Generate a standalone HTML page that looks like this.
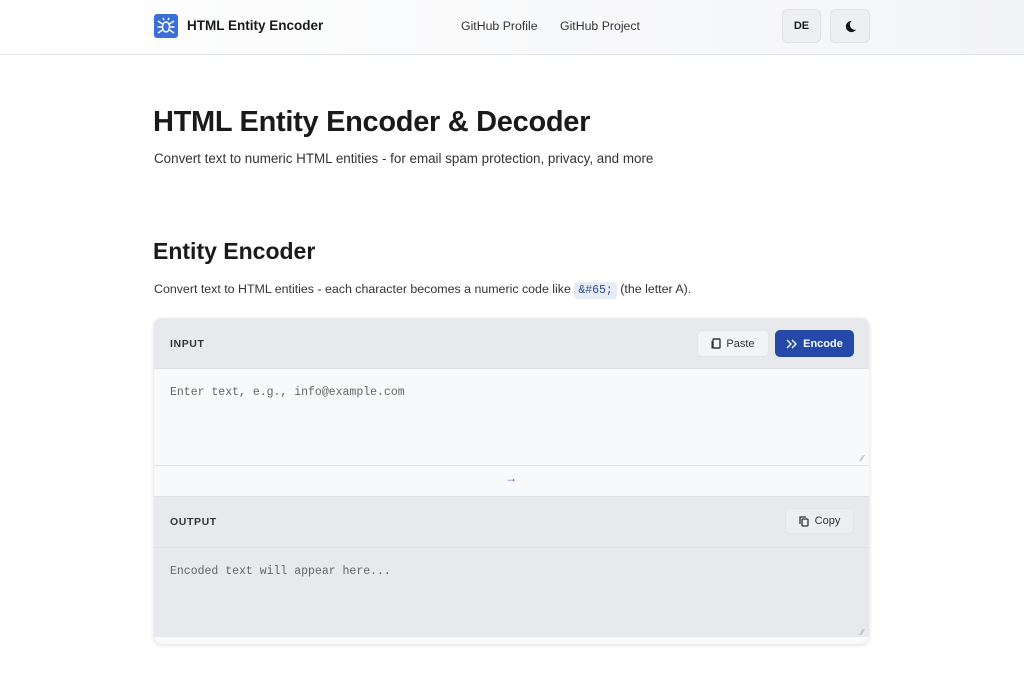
<!DOCTYPE html>
<html><head><meta charset="utf-8"><style>
*{box-sizing:border-box;margin:0;padding:0}
body{width:1024px;height:681px;overflow:hidden;background:#fff;font-family:"Liberation Sans",sans-serif;color:#1a1a1a;position:relative}
.hdr{position:absolute;left:0;top:0;width:1024px;height:55px;background:linear-gradient(90deg,#fff,#f3f4f6);border-bottom:1px solid #e3e4e7}
.abs{position:absolute}
.logo{left:154px;top:14px;width:24px;height:24px;background:#3b6fd8;border-radius:3px}
.brand{left:187px;top:18px;font-size:13.5px;font-weight:bold}
.nav{top:19px;font-size:12.3px;color:#333}
.btn{border:1px solid #e0e1e4;background:#eeeff1;border-radius:6px}
.mono{font-family:"Liberation Mono",monospace}
.card{left:154px;top:318px;width:715px;height:326px;border-radius:8px;background:#f8f9fa;box-shadow:0 1px 4px rgba(0,0,0,.15);overflow:hidden}
.lab{font-size:10.5px;font-weight:bold;letter-spacing:.6px;color:#333}
.sbtn{border:1px solid #e3e4e6;background:#f3f4f6;border-radius:5px;font-size:11px;color:#333;display:flex;align-items:center;justify-content:center;gap:5px}
</style></head><body>
<div class="hdr"></div>
<div class="abs logo"><svg width="24" height="24" viewBox="0 0 24 24" fill="none" stroke="#fff" stroke-width="1.4"><ellipse cx="12" cy="13" rx="3.5" ry="5"/><path d="M8.5 10 4 7M8.5 13H3.5M8.5 16 4 19M15.5 10 20 7M15.5 13h5M15.5 16 20 19M10 6l-1-2M14 6l1-2"/></svg></div>
<div class="abs brand">HTML Entity Encoder</div>
<div class="abs nav" style="left:461px">GitHub Profile</div>
<div class="abs nav" style="left:560px">GitHub Project</div>
<div class="abs btn" style="left:782px;top:9px;width:39px;height:34px;font-size:11px;font-weight:bold;text-align:center;line-height:32px">DE</div>
<div class="abs btn" style="left:830px;top:9px;width:40px;height:34px"><svg style="position:absolute;left:12px;top:9px" width="15" height="15" viewBox="0 0 24 24"><path d="M14 3a9 9 0 1 0 7 14 8 8 0 0 1-7-14z" fill="#111"/></svg></div>
<div class="abs" style="left:153px;top:106px;font-size:29px;font-weight:bold;letter-spacing:-.3px">HTML Entity Encoder &amp; Decoder</div>
<div class="abs" style="left:154px;top:151px;font-size:13.4px;color:#333">Convert text to numeric HTML entities - for email spam protection, privacy, and more</div>
<div class="abs" style="left:153px;top:238px;font-size:23px;font-weight:bold">Entity Encoder</div>
<div class="abs" style="left:154px;top:282px;font-size:12.4px;color:#333">Convert text to HTML entities - each character becomes a numeric code like <span class="mono" style="background:#e8ecf4;color:#2f4c9a;padding:2px 4px;border-radius:3px;font-size:11.5px">&amp;#65;</span> (the letter A).</div>
<div class="abs card">
 <div class="abs" style="left:0;top:0;width:715px;height:51px;background:#e8e9ec;border-bottom:1px solid #e0e1e4"></div>
 <div class="abs lab" style="left:16px;top:20px">INPUT</div>
 <div class="abs sbtn" style="left:543px;top:12px;width:72px;height:27px"><svg width="10" height="11" viewBox="0 0 10 11"><rect x="2" y="1" width="7" height="9" rx="1" fill="none" stroke="#333" stroke-width="1.4"/><path d="M1 3v7h5" stroke="#333" stroke-width="1" fill="none"/></svg>Paste</div>
 <div class="abs" style="left:621px;top:12px;width:79px;height:27px;background:#2449a8;border-radius:5px;color:#fff;font-size:11px;font-weight:bold;display:flex;align-items:center;justify-content:center;gap:5px"><svg width="12" height="10" viewBox="0 0 12 10" fill="none" stroke="#fff" stroke-width="1.3"><path d="M1 1l4 4-4 4M6 1l4 4-4 4"/></svg>Encode</div>
 <div class="abs mono" style="left:16px;top:68px;font-size:11.5px;color:#666">Enter text, e.g., info@example.com</div>
 <div class="abs" style="left:0;top:147px;width:715px;height:1px;background:#e2e3e6"></div>
 <div class="abs" style="left:351px;top:153px;font-size:12px;color:#5563b0">→</div>
 <div class="abs" style="left:0;top:178px;width:715px;height:141px;background:#e8e9ec;border-top:1px solid #e0e1e4"></div>
 <div class="abs" style="left:0;top:229px;width:715px;height:1px;background:#dfe0e3"></div>
 <div class="abs lab" style="left:16px;top:198px">OUTPUT</div>
 <div class="abs sbtn" style="left:631px;top:190px;width:69px;height:26px;background:#eceef0"><svg width="11" height="11" viewBox="0 0 11 11" fill="none" stroke="#333" stroke-width="1.3"><rect x="3" y="3" width="6" height="7" rx="1"/><path d="M1 8V1h6"/></svg>Copy</div>
 <div class="abs mono" style="left:16px;top:247px;font-size:11.5px;color:#666">Encoded text will appear here...</div>
 <div class="abs" style="left:707px;top:136px;font-size:8px;color:#999">⁄⁄</div>
 <div class="abs" style="left:707px;top:310px;font-size:8px;color:#999">⁄⁄</div>
</div>
</body></html>
